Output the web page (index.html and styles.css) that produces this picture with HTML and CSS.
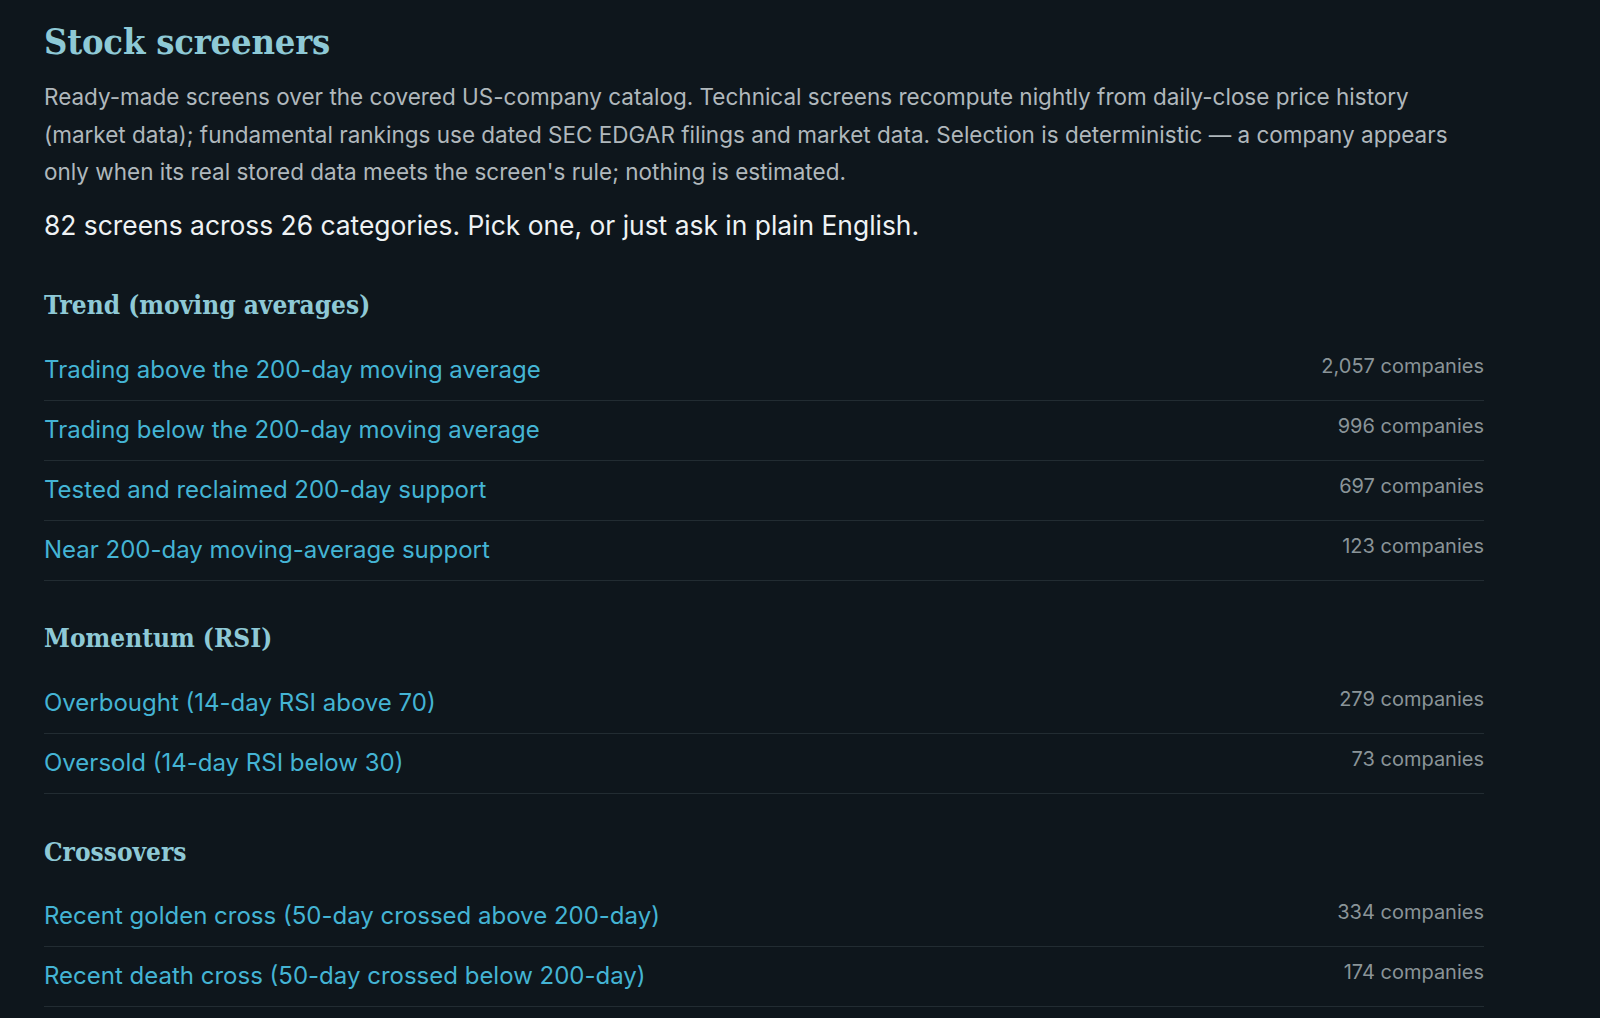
FILE: index.html
```html
<!DOCTYPE html>
<html lang="en">
<head>
<meta charset="utf-8">
<title>Stock screeners</title>
<link rel="stylesheet" href="styles.css">
</head>
<body>
<main class="page">
  <h1 class="title">Stock screeners</h1>
  <p class="intro">Ready-made screens over the covered US-company catalog. Technical screens recompute nightly from daily-close price history (market data); fundamental rankings use dated SEC EDGAR filings and market data. Selection is deterministic — a company appears only when its real stored data meets the screen's rule; nothing is estimated.</p>
  <p class="lead">82 screens across 26 categories. Pick one, or just ask in plain English.</p>

  <section class="group">
    <h2 class="group-title">Trend (moving averages)</h2>
    <ul class="screen-list">
      <li class="screen-row"><a class="screen-link" href="#">Trading above the 200-day moving average</a><span class="screen-count">2,057 companies</span></li>
      <li class="screen-row"><a class="screen-link" href="#">Trading below the 200-day moving average</a><span class="screen-count">996 companies</span></li>
      <li class="screen-row"><a class="screen-link" href="#">Tested and reclaimed 200-day support</a><span class="screen-count">697 companies</span></li>
      <li class="screen-row"><a class="screen-link" href="#">Near 200-day moving-average support</a><span class="screen-count">123 companies</span></li>
    </ul>
  </section>

  <section class="group">
    <h2 class="group-title">Momentum (RSI)</h2>
    <ul class="screen-list">
      <li class="screen-row"><a class="screen-link" href="#">Overbought (14-day RSI above 70)</a><span class="screen-count">279 companies</span></li>
      <li class="screen-row"><a class="screen-link" href="#">Oversold (14-day RSI below 30)</a><span class="screen-count">73 companies</span></li>
    </ul>
  </section>

  <section class="group">
    <h2 class="group-title">Crossovers</h2>
    <ul class="screen-list">
      <li class="screen-row"><a class="screen-link" href="#">Recent golden cross (50-day crossed above 200-day)</a><span class="screen-count">334 companies</span></li>
      <li class="screen-row"><a class="screen-link" href="#">Recent death cross (50-day crossed below 200-day)</a><span class="screen-count">174 companies</span></li>
    </ul>
  </section>
</main>
</body>
</html>
```

FILE: styles.css
```css
html, body {
  margin: 0;
  padding: 0;
  background: #0e161c;
}

body {
  font-family: Inter, "Noto Sans", "Liberation Sans", sans-serif;
  color: #b0b8bc;
  overflow: hidden;
}

.page {
  width: 1440px;
  padding: 21px 44px 0;
}

.title {
  margin: 0;
  font-family: "DejaVu Serif Condensed", "DejaVu Serif", "Liberation Serif", serif;
  font-stretch: condensed;
  font-weight: 700;
  font-size: 36px;
  line-height: 40px;
  color: #8ec9d6;
  letter-spacing: -0.2px;
}

.intro {
  margin: 17.4px 0 0;
  max-width: 1440px;
  font-size: 22.5px;
  line-height: 37.2px;
  color: #b0b8bc;
}

.lead {
  margin: 18.4px 0 0;
  font-size: 26.4px;
  line-height: 34px;
  color: #eef2f4;
}

.group {
  margin-top: 40.8px;
}

.group:first-of-type {
  margin-top: 46px;
}

.group-title {
  margin: 0 0 18.3px;
  font-family: "DejaVu Serif Condensed", "DejaVu Serif", "Liberation Serif", serif;
  font-stretch: condensed;
  font-weight: 700;
  font-size: 26px;
  line-height: 34px;
  color: #8ec9d6;
}

.screen-list {
  list-style: none;
  margin: 0;
  padding: 0;
}

.screen-row {
  display: flex;
  justify-content: space-between;
  align-items: flex-start;
  padding: 15px 0 16px;
  border-bottom: 1px solid #222c32;
}

.screen-link {
  font-size: 24px;
  line-height: 28px;
  color: #44b4d4;
  text-decoration: none;
}

.screen-count {
  font-size: 20px;
  line-height: 20px;
  color: #8a9498;
}
```
